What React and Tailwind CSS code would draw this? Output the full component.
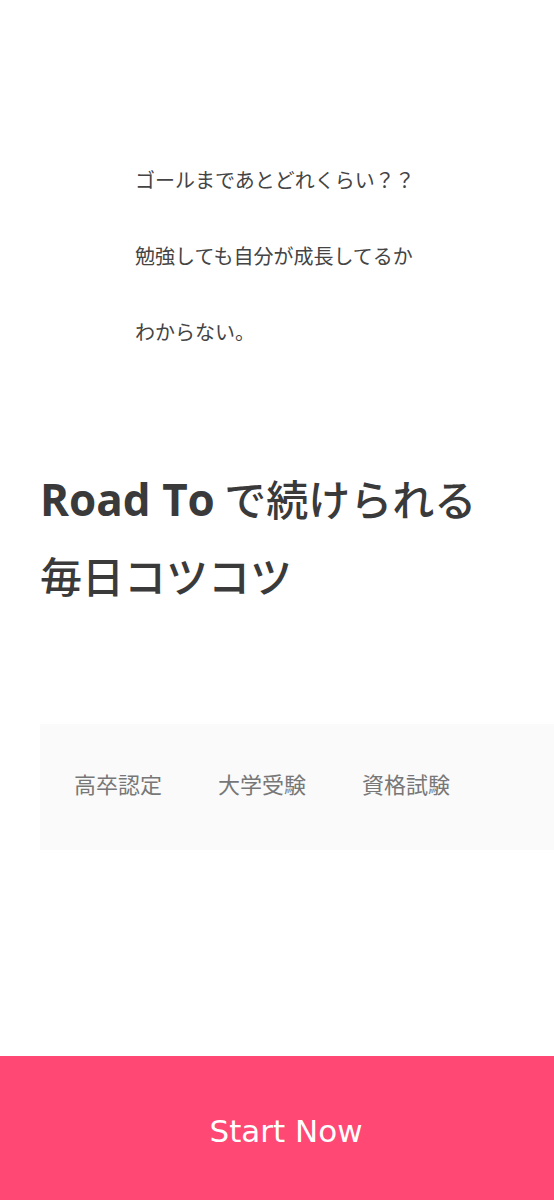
import React from "react";

const jp = "font-['Noto_Sans_CJK_JP','Noto_Sans',sans-serif]";

function Worries() {
  return (
    <div className={`pl-[135px] pt-[160px] text-[20px] leading-[40px] text-[#444] ${jp}`}>
      <p>ゴールまであとどれくらい？？</p>
      <p className="mt-[36px]">勉強しても自分が成長してるか</p>
      <p className="mt-[36px]">わからない。</p>
    </div>
  );
}

function Headline() {
  return (
    <h1 className={`mt-[108px] pl-[40px] text-[42px] leading-[76px] font-medium text-[#3a3a3a] ${jp}`}>
      <span className="font-bold text-[44px] font-['Open_Sans','Noto_Sans_CJK_JP',sans-serif]">Road To</span> で続けられる
      <br />
      毎日コツコツ
    </h1>
  );
}

function Tabs() {
  const items = ["高卒認定", "大学受験", "資格試験"];
  return (
    <div className={`mt-[111px] ml-[40px] h-[126px] bg-[#fafafa] flex items-center pl-[34px] pb-[8px] gap-[56px] ${jp}`}>
      {items.map((t) => (
        <span key={t} className="text-[22px] text-[#777]">{t}</span>
      ))}
    </div>
  );
}

export default function App() {
  return (
    <div className="relative w-[554px] h-[1200px] bg-white overflow-hidden">
      <Worries />
      <Headline />
      <Tabs />
      <button className="absolute bottom-0 left-0 w-full h-[144px] bg-[#ff4874] text-white text-[31px] pl-[18px] pt-[6px] font-['DejaVu_Sans',sans-serif]">
        Start Now
      </button>
    </div>
  );
}
